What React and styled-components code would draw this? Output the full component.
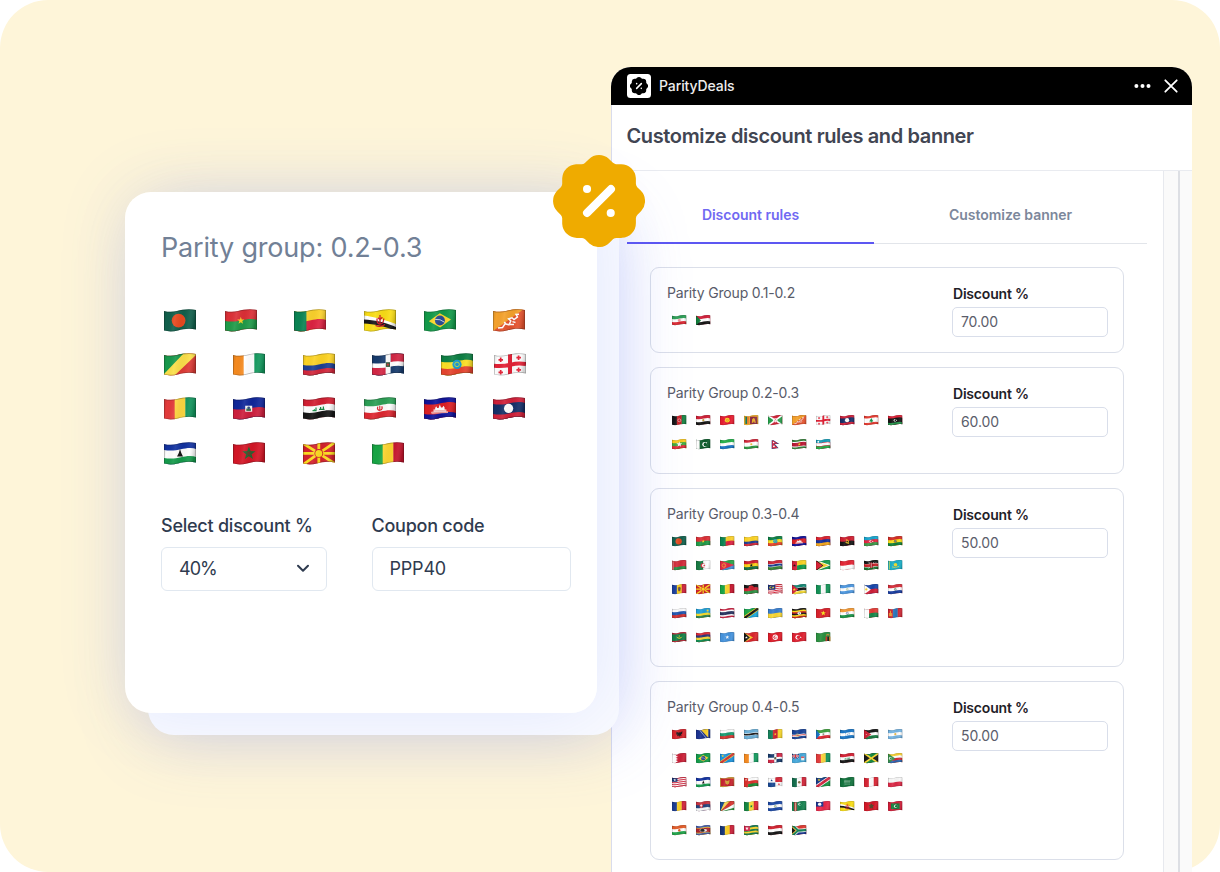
import React from "react";
import styled, { createGlobalStyle } from "styled-components";

const GlobalStyle = createGlobalStyle`
  *, *::before, *::after { box-sizing: border-box; }
  body { margin: 0; background: #fff; overflow: hidden; }
`;

/* ---------- flag drawing helpers, all in a 32 x 23 box ---------- */

const edge = (y) =>
  `M0 ${y + 2}C12 ${y + 4} 18 ${y} 26 ${y}Q30 ${y} 32 ${y + 1}V24H0Z`;

const bands = (colors, weights) => {
  const w = weights || colors.map(() => 1);
  const total = w.reduce((a, b) => a + b, 0);
  let acc = 0;
  return colors.map((fill, i) => {
    const y = (acc / total) * 20;
    acc += w[i];
    return <path key={"b" + i} d={i ? edge(y) : "M0 0H32V24H0Z"} fill={fill} />;
  });
};
const h = (...colors) => bands(colors);
const hw = (weights, ...colors) => bands(colors, weights);
const v = (...colors) =>
  colors.map((fill, i) => (
    <rect key={"v" + i} x={(32 / colors.length) * i} width={33 / colors.length} height="24" fill={fill} />
  ));
const bg = (fill) => <rect width="32" height="24" fill={fill} />;
const r = (x, y, w, ht, fill) => <rect x={x} y={y} width={w} height={ht} fill={fill} />;
const c = (x, y, rad, fill) => <circle cx={x} cy={y} r={rad} fill={fill} />;
const o = (x, y, rad, stroke, w = 1) => (
  <circle cx={x} cy={y} r={rad} fill="none" stroke={stroke} strokeWidth={w} />
);
const p = (d, fill) => <path d={d} fill={fill} />;
const l = (d, stroke, w = 1) => <path d={d} fill="none" stroke={stroke} strokeWidth={w} />;
const starPath = (x, y, rad) => {
  let d = "";
  for (let i = 0; i < 10; i++) {
    const a = (-90 + i * 36) * (Math.PI / 180);
    const q = i % 2 ? rad * 0.4 : rad;
    d += `${i ? "L" : "M"}${(x + q * Math.cos(a)).toFixed(2)} ${(y + q * Math.sin(a)).toFixed(2)}`;
  }
  return d + "Z";
};
const s = (x, y, rad, fill) => p(starPath(x, y, rad), fill);
const moon = (x, y, rad, fill, back) => [c(x, y, rad, fill), c(x + rad * 0.35, y, rad * 0.78, back)];
const hoist = (fill, x = 13) => p(`M0 1L${x} 12L0 23Z`, fill);
const rays = (x, y, fill) =>
  l(`M${x} ${y}L-2 0M${x} ${y}L34 -1M${x} ${y}L-2 24M${x} ${y}L34 23M${x} ${y}V-2M${x} ${y}V26M${x} ${y}H-2M${x} ${y}H34`, fill, 2.8);

const FLAGS = {
  BD: [bg("#11604c"), c(14.6, 11.6, 6.9, "#e8491f")],
  BF: [h("#dc2f36", "#1f9a48"), s(15.8, 11.6, 3.8, "#fcd327")],
  BJ: [h("#fbd12c", "#dd2342"), r(0, 0, 12.4, 24, "#0a8453")],
  BN: [bg("#f9dd16"), p("M0 6.5C10 8 18 10 32 15V19C20 14 10 12 0 11Z", "#fff"), p("M0 10.5C10 11 20 13 32 18V22C20 17 10 15 0 14.5Z", "#16161a"), l("M16 6V15M13 9.5Q12.6 14.6 16 15.2Q19.5 14.8 19.8 9.5M11.5 16.3Q16 18.6 21 15.5M14 8.7L16 10.6L18.4 8.2", "#cf1d2b", 1.3)],
  BR: [bg("#129a49"), p("M4.8 12.2L15.8 4.3L27 10.4L16.2 18.4Z", "#fcd629"), c(15.9, 11.4, 5, "#2b4b95"), l("M11.2 10.4Q16 9.6 20.5 13.2", "#dce5ee", 0.9)],
  BT: [bg("#e4522d"), p("M0 0H31L0 22Z", "#f4a12b"), l("M5 19L9.5 18.6L12 14.8L16 15.8L17.8 12L15.6 9.8L19 8.8L21 10.6L24.4 8L23 5.4L26 5.2M13 15L11.3 13M17 15.4L21 15.6M19.4 12.6L22.5 13.4", "#fff", 1.5)],
  CG: [bg("#dd3a35"), p("M0 0H22L0 22Z", "#17994c"), p("M20 0H32V2L9 24H0V21Z", "#fbdf49")],
  CI: v("#f58a1f", "#ffffff", "#12985d"),
  CO: hw([2, 1, 1], "#fcd325", "#1d3f94", "#d2283c"),
  DO: [h("#173b6d", "#173b6d"), r(18.5, 0, 14, 11, "#d22644"), r(0, 13, 14, 11, "#d22644"), r(13.6, 0, 5, 24, "#fff"), l("M0 12.4Q9 13.5 17 11.6T32 11", "#fff", 4.4), r(13.8, 9.2, 4.2, 4.7, "#355b3c"), c(15.9, 11.6, 1.2, "#c23b42")],
  ET: [h("#0d8044", "#fbdf25", "#e5442e"), c(16, 11.4, 4.6, "#199bd4"), o(16, 11.4, 2.3, "#cddc39", 0.9)],
  GE: [bg("#fcfcfc"), l("M16 0V24M0 12.8Q10 13.5 17 11.6T32 11", "#e22035", 4), l("M6.7 4.5V9M4.5 6.8H9M24.6 2.5V7M22.4 4.7H27M6.7 17V21.5M4.5 19.3H9M24.6 14.5V19M22.4 16.8H27", "#e22035", 1.7)],
  GN: v("#e33b3b", "#fcd640", "#11945c"),
  HT: [h("#10279a", "#cd1f3e"), r(12.2, 8.7, 7, 6, "#f5f5f5"), r(13.3, 11.5, 4.6, 2.4, "#376e45"), c(15.7, 10.8, 1.4, "#334f86")],
  IQ: [h("#d21f32", "#fdfdfd", "#161616"), l("M9.5 13.6H13.6M13 10.6V13.4M16 12.3H21.5M17.6 10V12M20.4 9.6V12M11.4 12.2V13.4", "#168a45", 1.2)],
  IR: [h("#2c9f55", "#fdfdfd", "#dd2730"), l("M15.8 8.8V14M13.8 9.6Q12.6 12.3 15.2 13.5M17.8 9.3Q19 12 16.6 13.3", "#dd2730", 1.1)],
  KH: [hw([1, 2, 1], "#10139a", "#dc1f23", "#10139a"), p("M7.5 16.5V14.8H9.5V12.6H11.2V11L12.2 9.2L13.2 11H14.6L15.8 7.6L17 10.6H18.4L19.5 8.8L20.6 10.6V12.6H22.4V14.4H24V16Z", "#fff"), l("M9 13.9H23M8 15.4H24", "#dc4a4a", 0.6)],
  LA: [hw([1, 2, 1], "#cf2039", "#142f68", "#cf2039"), c(15.6, 11.4, 4.6, "#fff")],
  LS: [hw([3, 4, 3], "#1232a0", "#fdfdfd", "#149a4b"), p("M16 7L17.3 11L19 14.5H13L14.8 11Z", "#141414")],
  MA: [bg("#d31626"), <path key="m" d={starPath(15.9, 11.4, 5.2)} fill="#6d3a2a" stroke="#1b6b33" strokeWidth="1.2" />],
  MK: [bg("#d3222c"), rays(15.8, 11.4, "#fbdc1f"), c(15.8, 11.4, 4.4, "#d3222c"), c(15.8, 11.4, 3.5, "#fbdc1f")],
  ML: v("#17a544", "#fcd530", "#c4142c"),
  SD: [h("#d2203a", "#fff", "#151515"), hoist("#117e3c", 11)],
  AF: [v("#141414", "#cf2028", "#158141"), o(16, 11.6, 3.2, "#f3dcdc", 1.3)],
  EG: [h("#cf1f36", "#fff", "#151515"), c(16, 11.4, 2.4, "#c9a03c")],
  KG: [bg("#e51c2f"), c(16, 11.4, 5.3, "#fce026"), o(16, 11.4, 2.4, "#e0622a", 1)],
  LK: [bg("#f7b52a"), r(3, 3.6, 4, 16, "#13795a"), r(7, 3.6, 4, 16, "#e9772b"), r(13, 3.6, 16, 16, "#8d2942"), p("M17 17L18 9L22 6L24 10L26 17H23L22 13L20 17Z", "#eeb330")],
  BI: [bg("#d12337"), p("M0 1L15 12L0 23ZM32 0L17 12L32 23Z", "#26a04b"), l("M0 1L32 22M0 23L32 0", "#fff", 3.4), c(16, 11.6, 4.6, "#fff"), c(16, 10, 1, "#d12337"), c(14.3, 13, 1, "#d12337"), c(17.8, 13, 1, "#d12337")],
  LB: [hw([1, 2, 1], "#e53a30", "#fff", "#e53a30"), p("M16 6.4L20.5 14.5H17V16.4H15V14.5H11.5Z", "#159a4c")],
  LY: [hw([1, 2, 1], "#dd2036", "#141414", "#27934b"), moon(15.5, 11.6, 3, "#fff", "#141414"), s(18.8, 11.6, 1.6, "#fff")],
  MM: [h("#fccb1c", "#40ab3d", "#e32a38"), s(16, 11.6, 6.8, "#fff")],
  PK: [bg("#0b5b2a"), r(0, 0, 8, 24, "#fff"), moon(19, 12, 5.3, "#fff", "#0b5b2a"), s(23, 8.5, 2, "#fff")],
  SL: h("#23b04a", "#fff", "#1673c4"),
  TJ: [hw([2, 3, 2], "#d4263a", "#fff", "#2b9640"), c(16, 11.5, 2.3, "#f0c23c")],
  NP: [p("M8 0L25 11H15L25 22H8Z", "#2d4b8e"), p("M9.2 2.2L22 10.3H12L22.4 20.9H9.2Z", "#d82b43"), c(12.4, 7.5, 1.6, "#fff"), c(13, 16, 2, "#fff")],
  SR: [hw([2, 1, 4, 1, 2], "#38823c", "#fff", "#ba1733", "#fff", "#38823c"), s(16, 11.5, 4, "#f4cc20")],
  UZ: [hw([6, 1, 6, 1, 6], "#16a0ba", "#d3233e", "#fff", "#d3233e", "#26ad46"), c(5, 6, 2, "#fff")],
  AM: h("#db2230", "#14319d", "#f5a81c"),
  AO: [h("#d01f31", "#151515"), l("M13 8Q20 8 19 14Q16 17 12 14M13 13L20 17", "#f7d131", 1.8), s(15, 10.5, 2, "#f7d131")],
  AZ: [h("#18a5ce", "#e42540", "#3b9a48"), moon(15, 11.6, 3, "#fff", "#e42540"), s(19.2, 11.6, 1.9, "#fff")],
  BO: [h("#d52d24", "#fae11b", "#12803b"), c(16, 11.5, 3.2, "#a67631"), c(16, 11, 1.5, "#4fa0a8")],
  BY: [hw([2, 1], "#d52b38", "#269143"), r(0, 0, 4, 24, "#e08a88"), l("M2 0V24", "#d52b38", 1.6)],
  DZ: [v("#167a42", "#fff"), moon(15, 12, 5, "#d52637", "#fff"), s(18, 12, 2.6, "#d52637")],
  ER: [h("#29a447", "#418fdb"), p("M0 1L32 11L0 23Z", "#e22a42"), o(8.5, 12, 3.9, "#f1bb2b", 1.5)],
  GH: [h("#d01f2e", "#fbd216", "#126e40"), s(16, 11.6, 4, "#171717")],
  GM: hw([6, 1, 4, 1, 6], "#d12738", "#fff", "#173b8f", "#fff", "#388338"),
  GW: [h("#fbd323", "#129b4b"), r(0, 0, 11, 24, "#d52139"), s(5.5, 12, 3.5, "#171717")],
  GY: [bg("#189c4c"), p("M0 0L32 11.5L0 24Z", "#fff"), p("M0 2L28 11.6L0 22Z", "#fbd52d"), p("M0 0L16 12L0 24Z", "#171717"), p("M0 2L14 12L0 22Z", "#d92135")],
  ID: h("#e32433", "#fff"),
  KE: [hw([6, 1, 6, 1, 6], "#161616", "#fff", "#c92027", "#fff", "#17702a"), l("M10 4L22 19M22 4L10 19", "#eee", 1.1), <ellipse key="e" cx="16" cy="11.5" rx="3.5" ry="6.5" fill="#aa1821" />, l("M16 6V17", "#fff", 1.2)],
  KZ: [bg("#18afc7"), c(16.5, 10.5, 4, "#f3dc2f"), l("M9 15Q16 19 24 14M3 2V21", "#e8dc45", 1.6)],
  MD: [v("#1b3f9c", "#fbd11f", "#cb2138"), p("M12.5 8L16 6L19.5 8L18 16H14Z", "#8a562e"), r(14.7, 10, 2.8, 3.6, "#365a8b")],
  MW: [h("#171717", "#ce2233", "#2e9245"), p("M10 9A6 5 0 0 1 22 8Z", "#d9232f")],
  MY: [h("#d9283d", "#fff", "#d9283d", "#fff", "#d9283d", "#fff", "#d9283d", "#fff", "#d9283d", "#fff"), r(0, 0, 16, 12.5, "#16317f"), moon(6.5, 7.6, 3.5, "#f9d530", "#16317f"), s(11.3, 7.6, 2.8, "#f9d530")],
  MZ: [hw([6, 1, 6, 1, 6], "#128774", "#fff", "#151515", "#fff", "#f8dc32"), hoist("#d3253c", 14), s(5, 12, 3.8, "#f9d71f")],
  NG: v("#129155", "#fff", "#129155"),
  NI: [h("#4c97e0", "#fff", "#4c97e0"), o(16, 11.5, 1.9, "#a4bd77", 1.1)],
  PH: [h("#1645aa", "#cf1e38"), hoist("#fff", 15), c(5, 12, 2.5, "#f8cf36")],
  PY: [h("#d62e3a", "#fff", "#183c9f"), o(16, 11.5, 2, "#4b7a4e", 1.4)],
  RU: h("#fcfcfc", "#2055ae", "#d5302d"),
  RW: [hw([2, 1, 1], "#20a0da", "#f6db2b", "#328350"), c(25.5, 5.5, 2.3, "#f1cb2c")],
  TH: hw([1, 1, 2, 1, 1], "#d02242", "#fff", "#28335f", "#fff", "#d02242"),
  TZ: [bg("#1aa7dc"), p("M0 0H32L0 23Z", "#1da746"), l("M-2 24L34 -1", "#f9d32e", 8), l("M-2 24L34 -1", "#171717", 5)],
  UA: h("#397fd0", "#fad735"),
  UG: [h("#171717", "#f8da19", "#d12720", "#171717", "#f8da19", "#d12720"), c(16, 11.5, 3.8, "#fff"), l("M15 9L17 14", "#555", 1.4)],
  VN: [bg("#d91f2a"), s(16, 11.5, 6, "#fbea21")],
  IN: [h("#f59a35", "#fff", "#189245"), o(16, 11.5, 2.3, "#2d3a8d", 1)],
  MG: [h("#e33d37", "#18894b"), r(0, 0, 11, 24, "#fff")],
  MN: [v("#cf2734", "#2a77bd", "#cf2734"), l("M5.5 6V18M3 11V18M8 11V18", "#f4ce33", 1.6)],
  MR: [hw([1, 5, 1], "#be2a37", "#128046", "#be2a37"), p("M9 10Q16 20 23 10Q16 15 9 10Z", "#e9d733"), s(16, 9, 2.3, "#e9d733")],
  MU: h("#dd2a38", "#2b367b", "#f8d536", "#128d54"),
  SO: [bg("#4593dd"), s(16, 11.5, 4.6, "#fff")],
  TL: [bg("#dc272d"), hoist("#f9cb31", 20), hoist("#171717", 13), s(5.3, 12, 3.3, "#fff")],
  TN: [bg("#df1b29"), c(16, 11.5, 5.8, "#fff"), moon(16, 11.5, 4, "#df1b29", "#fff"), s(17.5, 11.5, 2, "#df1b29")],
  TR: [bg("#df2030"), moon(12.5, 11.7, 5, "#fff", "#df2030"), s(19, 11.5, 2.5, "#fff")],
  ZM: [bg("#2b9140"), r(21, 10, 4, 14, "#cf2e26"), r(25, 10, 4, 14, "#161616"), r(28.8, 10, 4, 14, "#ef8e2a"), l("M22 7Q26 4 30 7", "#e88d2a", 2)],
  AL: [bg("#d6232b"), p("M10 6L15 8L16 6L17 8L23 5L22 11L20 11L21 15L17 14L16 18L15 14L11 16L12 12L9 12Z", "#24191b")],
  BA: [bg("#1a3290"), p("M9 0H27V19Z", "#f8cf2b"), l("M6 0L24 22", "#dce3ef", 1.4)],
  BG: h("#fcfcfc", "#189a70", "#d63430"),
  BW: hw([8, 1, 4, 1, 8], "#6bb0d9", "#fff", "#181818", "#fff", "#6bb0d9"),
  CM: [v("#17835c", "#d02530", "#f8d72a"), s(16, 11.5, 3.4, "#f8d72a")],
  CV: [hw([6, 1, 1, 1, 3], "#1a4499", "#fff", "#d12d35", "#fff", "#1a4499"), o(12, 13.8, 3.2, "#e4c63e", 1.1)],
  GQ: [h("#3da03c", "#fff", "#df2832"), hoist("#1a74c5", 9), r(14.4, 9.5, 3.6, 4, "#8a9d7f")],
  HN: [h("#1976c6", "#fff", "#1976c6"), c(16, 11.5, 1, "#1976c6"), c(12, 10.2, 1, "#1976c6"), c(20, 10, 1, "#1976c6"), c(12, 13.4, 1, "#1976c6"), c(20, 13, 1, "#1976c6")],
  JO: [h("#171717", "#fff", "#187b41"), hoist("#cd2134", 16), s(5, 12, 1.6, "#fff")],
  AR: [h("#75b4e2", "#fff", "#75b4e2"), c(16, 11.4, 2.4, "#ecbd50")],
  BH: [bg("#cb2038"), p("M0 0H8L13 3L8 5.5L13 8L8 10.5L13 13L8 15.5L13 18L8 21V24H0Z", "#fff")],
  CD: [bg("#1b94df"), l("M-2 24L34 -1", "#f8d63a", 7.5), l("M-2 24L34 -1", "#d03236", 5), s(6, 6.5, 3.4, "#f8d63a")],
  FJ: [bg("#45a9dc"), r(0, 0, 15, 12, "#1b397f"), l("M0 0L15 12M15 0L0 12", "#fff", 1.6), l("M7.5 0V12M0 6.5H15", "#fff", 3.2), l("M7.5 0V12M0 6.5H15", "#d22938", 2.2), r(20, 8, 7, 8, "#f1efe8"), r(20, 8, 7, 2.5, "#d22938")],
  JM: [bg("#191919"), p("M0 0H32L16 11.5ZM0 24H32L16 11.5Z", "#168c41"), l("M-1 0L33 23M-1 23L33 0", "#f9d732", 3.8)],
  KM: [h("#f8cf2f", "#fff", "#d22d38", "#2e65b0"), hoist("#39904c", 16), moon(5, 12, 3, "#fff", "#39904c")],
  LR: [h("#d32a41", "#fff", "#d32a41", "#fff", "#d32a41", "#fff", "#d32a41", "#fff", "#d32a41"), r(0, 0, 12, 10.5, "#173473"), s(6, 6.5, 3.4, "#fff")],
  ME: [bg("#d2a13c"), r(2, 3.4, 28, 16.4, "#c6222d"), p("M11 7L16 9L21 6.5L20 14L16 17L12 14Z", "#d6a63d")],
  OM: [h("#fff", "#db302b", "#1b8a34"), r(0, 0, 9, 24, "#db302b"), s(4.5, 6, 2.4, "#fff")],
  PA: [bg("#fff"), r(16, 0, 16, 11, "#d5293a"), r(0, 12.3, 16, 12, "#194792"), s(8, 7.5, 3, "#194792"), s(24, 16, 3, "#d5293a")],
  MX: [v("#136c4b", "#fff", "#cf2337"), c(16, 11.5, 2.8, "#8a734a")],
  NA: [bg("#189443"), p("M0 0H32L0 23Z", "#1a3c8b"), l("M-2 24L34 -1", "#fff", 9), l("M-2 24L34 -1", "#d12841", 6), s(6.5, 6.5, 3.5, "#f8d22b")],
  SA: [bg("#11723c"), l("M9 8.6H23M9 11H22", "#b9d6c4", 1.3), l("M10 15.5H22", "#d8e8de", 0.9)],
  PE: v("#d72433", "#fff", "#d72433"),
  PL: h("#f8f8f8", "#db2946"),
  RO: v("#1a3b91", "#fad128", "#cf2138"),
  RS: [h("#c83340", "#23437d", "#f8f8f8"), p("M8 6H15V13L11.5 16L8 13Z", "#d42f3d"), l("M11.5 7V14M9 10H14", "#fff", 1.6)],
  SC: [bg("#2f9540"), p("M0 24V0H12Z", "#1b4b93"), p("M0 24L11 0H23Z", "#fbd44e"), p("M0 24L22 0H32V7Z", "#d63430"), p("M0 24L32 6V14Z", "#fff")],
  SN: [v("#148542", "#fae13f", "#dd2733"), s(16, 11.5, 3.5, "#148542")],
  SV: [h("#1c49a6", "#fff", "#1c49a6"), o(16, 11.5, 2.1, "#698b52", 1.2)],
  TM: [bg("#178250"), r(4.5, 0, 6, 24, "#aa3539"), l("M7.5 3V22", "#e7c69d", 1.8), moon(17, 7, 3, "#fff", "#178250")],
  TW: [bg("#e8294a"), r(0, 0, 16, 12.2, "#1b3793"), c(8, 6.9, 3.6, "#fff")],
  MV: [bg("#d21d38"), r(6.5, 5.3, 19, 12.5, "#157d3d"), moon(17, 11.5, 3.8, "#fff", "#157d3d")],
  NE: [h("#e25b28", "#fff", "#1fa348"), c(16, 11.5, 2.6, "#e25b28")],
  SZ: [hw([3, 1, 7, 1, 3], "#475fa9", "#f8d83d", "#a8252e", "#f8d83d", "#475fa9"), <ellipse key="z" cx="16" cy="11.5" rx="8" ry="3.4" fill="#eee" />, <ellipse key="y" cx="14" cy="11.5" rx="5" ry="3.4" fill="#222" />],
  TD: v("#153477", "#fbd125", "#c91f37"),
  TG: [h("#177a52", "#f9d42c", "#177a52", "#f9d42c", "#177a52"), r(0, 0, 13, 13, "#d5234a"), s(6.5, 7.5, 4, "#fff")],
  YE: h("#d1212f", "#fff", "#171717"),
  ZA: [h("#dc3a31", "#1a3893"), l("M-2 -2L13 12L-2 26M12 12.4Q22 12 32 10.8", "#fff", 8), l("M-2 -2L13 12L-2 26M12 12.4Q22 12 32 10.8", "#138155", 5), p("M0 3L10 12L0 21Z", "#f5b82f"), p("M0 5.5L7.5 12L0 18.5Z", "#171717")],
};

const FlagSvg = styled.svg`
  display: block;
  flex: none;
  width: ${({ $w }) => $w}px;
  height: ${({ $w }) => $w * 0.72}px;
  margin-right: ${({ $after }) => $after || 0}px;
`;

const HiddenDefs = styled.svg`
  position: absolute;
  width: 0;
  height: 0;
`;

const WAVE =
  "M0 1.9C4 3 9 3 13 2C18 0.6 25 -0.6 32 1V20.4C25 18.8 19 19.9 14 21.4C9 22.8 4 22.6 0 21.6Z";

function FlagDefs() {
  return (
    <HiddenDefs>
      <defs>
        <clipPath id="wave">
          <path d={WAVE} />
        </clipPath>
        <linearGradient id="sheen" x1="0" y1="0" x2="1" y2="0.12">
          <stop offset="0" stopColor="#000" stopOpacity="0.14" />
          <stop offset="0.14" stopColor="#000" stopOpacity="0" />
          <stop offset="0.38" stopColor="#fff" stopOpacity="0.08" />
          <stop offset="0.62" stopColor="#000" stopOpacity="0.03" />
          <stop offset="0.82" stopColor="#fff" stopOpacity="0.06" />
          <stop offset="1" stopColor="#000" stopOpacity="0.18" />
        </linearGradient>
      </defs>
    </HiddenDefs>
  );
}

function Flag({ code, width, after }) {
  const isPennant = code === "NP";
  return (
    <FlagSvg viewBox="0 0 32 23" $w={width} $after={after} role="img" aria-label={code}>
      <g clipPath="url(#wave)">
        {React.Children.toArray(FLAGS[code])}
        {!isPennant && <rect width="32" height="24" fill="url(#sheen)" />}
        {!isPennant && <path d={WAVE} fill="none" stroke="#111" strokeOpacity="0.28" strokeWidth="1.5" />}
      </g>
    </FlagSvg>
  );
}

/* ---------- badge ---------- */

const BadgeSvg = styled.svg`
  display: block;
  width: ${({ $size }) => $size}px;
  height: ${({ $size }) => $size}px;
`;

function Badge({ size, color }) {
  return (
    <BadgeSvg $size={size} viewBox="2 2 20 20">
      <path
        fill={color}
        d="M12.01 2.011a3.2 3.2 0 0 1 2.113 .797l.154 .145l.698 .698a1.2 1.2 0 0 0 .71 .341l.135 .008h1a3.2 3.2 0 0 1 3.195 3.018l.005 .182v1c0 .27 .092 .533 .258 .743l.09 .1l.697 .698a3.2 3.2 0 0 1 .147 4.382l-.145 .154l-.698 .698a1.2 1.2 0 0 0 -.341 .71l-.008 .135v1a3.2 3.2 0 0 1 -3.018 3.195l-.182 .005h-1a1.2 1.2 0 0 0 -.743 .258l-.1 .09l-.698 .697a3.2 3.2 0 0 1 -4.382 .147l-.154 -.145l-.698 -.698a1.2 1.2 0 0 0 -.71 -.341l-.135 -.008h-1a3.2 3.2 0 0 1 -3.195 -3.018l-.005 -.182v-1a1.2 1.2 0 0 0 -.258 -.743l-.09 -.1l-.697 -.698a3.2 3.2 0 0 1 -.147 -4.382l.145 -.154l.698 -.698a1.2 1.2 0 0 0 .341 -.71l.008 -.135v-1l.005 -.182a3.2 3.2 0 0 1 3.013 -3.013l.182 -.005h1a1.2 1.2 0 0 0 .743 -.258l.1 -.09l.698 -.697a3.2 3.2 0 0 1 2.269 -.944z"
      />
      <path d="M9.4 14.6L14.6 9.4" stroke="#fff" strokeWidth="1.75" strokeLinecap="round" />
      <circle cx="9.4" cy="9.4" r="0.88" fill="#fff" />
      <circle cx="14.55" cy="14.6" r="0.88" fill="#fff" />
    </BadgeSvg>
  );
}

/* ---------- page ---------- */

const Stage = styled.main`
  position: relative;
  display: flex;
  justify-content: flex-end;
  width: 1220px;
  height: 872px;
  padding: 67px 28px 0 0;
  border-radius: 48px;
  background: #fef5d9;
  font-family: Inter, sans-serif;
`;

const Panel = styled.section`
  display: flex;
  flex-direction: column;
  width: 581.5px;
  height: 805px;
  overflow: hidden;
  border-radius: 20px 20px 0 0;
  background: #fff;
  box-shadow: inset 1px 0 0 #d9dcec;
`;

const TitleBar = styled.header`
  display: flex;
  flex: none;
  align-items: center;
  height: 37.5px;
  padding: 0 13px 0 16.5px;
  background: #000;
  color: #ececec;
`;

const LogoTile = styled.span`
  display: grid;
  place-items: center;
  width: 24px;
  height: 24px;
  border-radius: 3.5px;
  background: #fff;
`;

const AppName = styled.span`
  margin: 0 auto 0 8px;
  font-size: 14px;
  font-weight: 500;
  letter-spacing: -0.1px;
`;

const BarIcon = styled.svg`
  display: block;
  width: ${({ $w }) => $w}px;
  height: 16px;
  margin-left: ${({ $gap }) => $gap || 0}px;
`;

const Heading = styled.h1`
  flex: none;
  height: 66px;
  margin: 0;
  padding: 0 16px;
  border-bottom: 1px solid #e9ebf0;
  color: #414552;
  font-size: 20px;
  font-weight: 640;
  line-height: 63px;
  letter-spacing: -0.37px;
`;

const Body = styled.div`
  display: flex;
  flex: 1;
  min-height: 0;
`;

const Content = styled.div`
  flex: none;
  width: 553.5px;
  padding: 15px 16px 0 16.5px;
  border-right: 1px solid #e7e9ee;
`;

const Gutter = styled.div`
  width: ${({ $w }) => $w}px;
  background: #fafafa;
  border-right: ${({ $line }) => ($line ? "2px solid #dddfe4" : "none")};
`;

const Tabs = styled.nav`
  display: flex;
  height: 58.5px;
  border-bottom: 1px solid #e2e5ea;
`;

const Tab = styled.span`
  display: block;
  width: ${({ $w }) => $w}px;
  height: 58.5px;
  border-bottom: 2px solid ${({ $active }) => ($active ? "#5d57f2" : "transparent")};
  color: ${({ $active }) => ($active ? "#7069f2" : "#7c879b")};
  font-size: 14px;
  font-weight: 600;
  line-height: 58px;
  letter-spacing: -0.02px;
  text-align: center;
`;

const Groups = styled.div`
  display: flex;
  flex-direction: column;
  gap: 14px;
  padding: 23px 23px 0;
`;

const GroupCard = styled.article`
  display: flex;
  flex: none;
  justify-content: space-between;
  height: ${({ $h }) => $h}px;
  padding: 16px 15px 0 16px;
  border: 1px solid #dbdfe9;
  border-radius: 9px;
`;

const GroupName = styled.h2`
  margin: 0 0 11px;
  color: #585b69;
  font-size: 14px;
  font-weight: 400;
  line-height: 18px;
  letter-spacing: -0.17px;
`;

const SmallFlags = styled.div`
  display: grid;
  grid-template-columns: repeat(10, 24px);
  grid-auto-rows: 24px;
  padding: 2px 0 0 5px;
`;

const DiscountField = styled.div`
  width: 156px;
`;

const FieldName = styled.div`
  padding-left: 1px;
  color: #1f2128;
  font-size: 14px;
  font-weight: 600;
  line-height: 20px;
  letter-spacing: -0.2px;
`;

const FieldValue = styled.div`
  height: 30px;
  margin-top: 3px;
  padding-left: 8px;
  border: 1px solid #d9deea;
  border-radius: 5px;
  background: #fff;
  color: #5b5d6b;
  font-size: 14px;
  line-height: 28px;
  letter-spacing: -0.1px;
`;

const Stack = styled.div`
  position: absolute;
  top: 192px;
  left: 124.5px;
`;

const BackSheet = styled.div`
  position: absolute;
  top: 22px;
  left: 23px;
  width: 471.5px;
  height: 521px;
  border-radius: 26px;
  background: #f9faff;
  box-shadow: 0 0 70px rgba(92, 112, 240, 0.28);
`;

const Glow = styled.div`
  position: absolute;
  inset: 0;
  border-radius: 26px;
  box-shadow: 0 0 70px rgba(92, 124, 240, 0.14);
`;

const FrontCard = styled.section`
  position: relative;
  width: 472.5px;
  height: 521px;
  padding: 37px 26px 0 36.5px;
  border-radius: 26px;
  background: #fff;
`;

const CardTitle = styled.h2`
  margin: 0 0 43px;
  color: #718096;
  font-size: 27px;
  font-weight: 430;
  line-height: 37px;
  letter-spacing: -0.18px;
`;

const FlagRow = styled.div`
  display: flex;
  height: 44.2px;
  padding-left: 3px;
`;

const Form = styled.div`
  display: flex;
  gap: 44.5px;
  margin-top: 28px;
`;

const FormField = styled.label`
  display: block;
  width: ${({ $w }) => $w}px;
  color: #2f3b4f;
  font-size: 18px;
  font-weight: 500;
  line-height: 24px;
  letter-spacing: -0.24px;
  white-space: nowrap;
`;

const Box = styled.span`
  display: flex;
  align-items: center;
  justify-content: space-between;
  height: 44px;
  margin-top: 9px;
  padding: 0 16px 0 17px;
  border: 1px solid #e1e8f0;
  border-radius: 6px;
  font-weight: 400;
  letter-spacing: ${({ $tight }) => ($tight ? "-1px" : "-0.2px")};
`;

const Chevron = styled.svg`
  display: block;
  width: 14px;
  height: 9px;
`;

const BadgeHolder = styled.div`
  position: absolute;
  top: 155px;
  left: 553px;
`;

const BIG_ROWS = [
  [["BD", 29], ["BF", 37], ["BJ", 37.5], ["BN", 28.5], ["BR", 37], ["BT", 0]],
  [["CG", 37], ["CI", 37.5], ["CO", 37], ["DO", 37.5], ["ET", 20.5], ["GE", 0]],
  [["GN", 37], ["HT", 37.5], ["IQ", 29], ["IR", 28.5], ["KH", 37], ["LA", 0]],
  [["LS", 37], ["MA", 37.5], ["MK", 37], ["ML", 0]],
];

const GROUPS = [
  { range: "0.1-0.2", value: "70.00", height: 86, flags: "IR SD" },
  { range: "0.2-0.3", value: "60.00", height: 107, flags: "AF EG KG LK BI BT GE LA LB LY MM PK SL TJ NP SR UZ" },
  {
    range: "0.3-0.4", value: "50.00", height: 179,
    flags: "BD BF BJ CO ET KH AM AO AZ BO BY DZ ER GH GM GW GY ID KE KZ MD MK ML MW MY MZ NG NI PH PY RU RW TH TZ UA UG VN IN MG MN MR MU SO TL TN TR ZM",
  },
  {
    range: "0.4-0.5", value: "50.00", height: 179,
    flags: "AL BA BG BW CM CV GQ HN JO AR BH BR CD CI DO FJ GN IQ JM KM LR LS ME OM PA MX NA SA PE PL RO RS SC SN SV TM TW BN MA MV NE SZ TD TG YE ZA",
  },
];

export default function App() {
  return (
    <>
      <GlobalStyle />
      <FlagDefs />
      <Stage>
        <Panel>
          <TitleBar>
            <LogoTile>
              <Badge size={18} color="#000" />
            </LogoTile>
            <AppName>ParityDeals</AppName>
            <BarIcon $w={17} viewBox="0 0 17 16" fill="#fff">
              <circle cx="2.4" cy="8" r="2" />
              <circle cx="8.5" cy="8" r="2" />
              <circle cx="14.5" cy="8" r="2" />
            </BarIcon>
            <BarIcon $w={16} $gap={12} viewBox="0 0 16 16" fill="none" stroke="#fff" strokeWidth="1.8" strokeLinecap="round">
              <path d="M2.3 2.3L13.7 13.7M13.7 2.3L2.3 13.7" />
            </BarIcon>
          </TitleBar>
          <Heading>Customize discount rules and banner</Heading>
          <Body>
            <Content>
              <Tabs>
                <Tab $w={247} $active>Discount rules</Tab>
                <Tab $w={273}>Customize banner</Tab>
              </Tabs>
              <Groups>
                {GROUPS.map((g) => (
                  <GroupCard key={g.range} $h={g.height}>
                    <div>
                      <GroupName>Parity Group {g.range}</GroupName>
                      <SmallFlags>
                        {g.flags.split(" ").map((code) => (
                          <Flag key={code} code={code} width={14.6} />
                        ))}
                      </SmallFlags>
                    </div>
                    <DiscountField>
                      <FieldName>Discount %</FieldName>
                      <FieldValue>{g.value}</FieldValue>
                    </DiscountField>
                  </GroupCard>
                ))}
              </Groups>
            </Content>
            <Gutter $w={16} $line />
            <Gutter $w={12} />
          </Body>
        </Panel>
        <Stack>
          <BackSheet />
          <Glow />
          <FrontCard>
            <CardTitle>Parity group: 0.2-0.3</CardTitle>
            {BIG_ROWS.map((row, i) => (
              <FlagRow key={i}>
                {row.map(([code, after]) => (
                  <Flag key={code} code={code} width={32} after={after} />
                ))}
              </FlagRow>
            ))}
            <Form>
              <FormField $w={166}>
                Select discount %
                <Box $tight>
                  40%
                  <Chevron viewBox="0 0 14 9" fill="none" stroke="#2f3b4f" strokeWidth="2" strokeLinecap="round" strokeLinejoin="round">
                    <path d="M2 1.8L7 6.8L12 1.8" />
                  </Chevron>
                </Box>
              </FormField>
              <FormField $w={199}>
                Coupon code
                <Box>PPP40</Box>
              </FormField>
            </Form>
          </FrontCard>
        </Stack>
        <BadgeHolder>
          <Badge size={92} color="#efab00" />
        </BadgeHolder>
      </Stage>
    </>
  );
}
